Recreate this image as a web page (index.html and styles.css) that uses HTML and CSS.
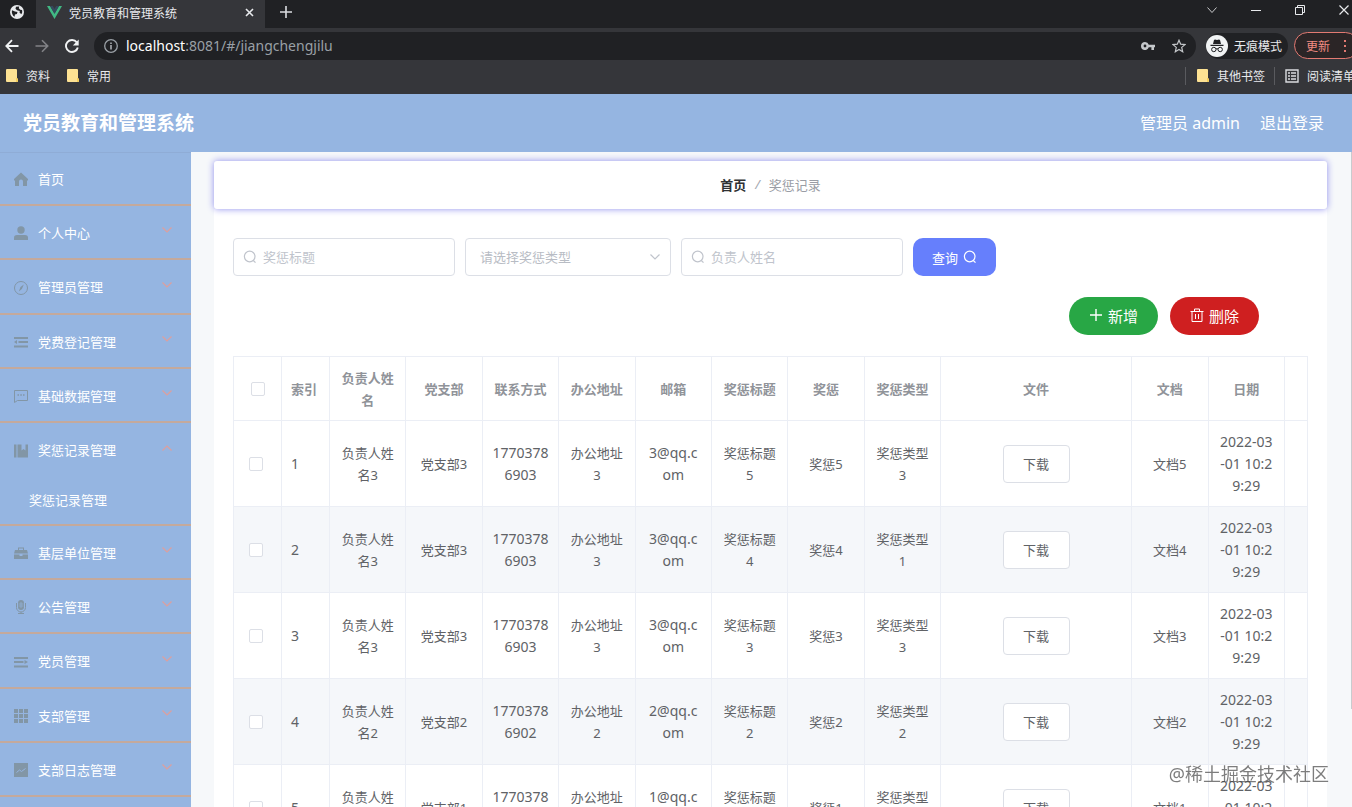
FILE: index.html
```html
<!DOCTYPE html>
<html lang="zh-CN">

<head>
    <meta charset="utf-8">
    <title>党员教育和管理系统</title>
    <link rel="stylesheet" href="styles.css">
</head>

<body>
    <!-- icons -->
    <svg class="sprite" aria-hidden="true">
        <symbol id="i-down" viewBox="0 0 12 12">
            <path d="M1.5 3.5 6 8l4.5-4.5" fill="none" stroke="currentColor" stroke-width="1.2" />
        </symbol>
        <symbol id="i-search" viewBox="0 0 14 14">
            <circle cx="6.7" cy="6.5" r="5.3" fill="none" stroke="currentColor" stroke-width="1.2" />
            <path d="M10.3 10.5l2.2 2.2" stroke="currentColor" stroke-width="1.2" />
        </symbol>
        <symbol id="i-folder" viewBox="0 0 12 14">
            <path d="M0 1q0-1 1-1h9q1 0 1 1v8q1 .5 1 2v1q0 1-1 1H1q-1 0-1-1z" fill="#fde293" />
            <path d="M10 9h1q1 1 1 2v1q0 1-1 1h-1z" fill="#f5cf5c" />
        </symbol>
    </svg>

    <div class="browser">
        <div class="tabs">
            <button class="tab-pinned" aria-label="新标签页">
                <svg width="14" height="14" viewBox="0 0 14 14">
                    <circle cx="7" cy="7" r="7" fill="#e8eaed" />
                    <path d="M2 5.2 5 6.5l2.5.6-.6 1.8-2 .6-.3 2.3C2.6 10.5 1.3 8 2 5.2zM6 1.8l3.2-.3-.4 1.8 1.4 1.5 1.8.1c.5 2 .2 3-.7 4.3L9.5 7.6 9.8 6 7 5.3 5.5 3.8z" fill="#202124" />
                </svg>
            </button>
            <div class="tab">
                <svg width="15" height="13" viewBox="0 0 15 13">
                    <path d="M0 0h3l4.5 7.8L12 0h3L7.5 13z" fill="#41b883" />
                    <path d="M3 0h2.8l1.7 3 1.7-3H12L7.5 7.8z" fill="#35495e" />
                </svg>
                <span>党员教育和管理系统</span>
                <button aria-label="关闭标签页">
                    <svg width="9" height="9" viewBox="0 0 9 9">
                        <path d="M1 1l7 7M8 1L1 8" stroke="#e8eaed" stroke-width="1.6" />
                    </svg>
                </button>
            </div>
            <button class="tab-new" aria-label="新建标签页">
                <svg width="12" height="12" viewBox="0 0 12 12">
                    <path d="M6 0v12M0 6h12" stroke="#dadce0" stroke-width="1.6" />
                </svg>
            </button>
            <div class="window-buttons">
                <button aria-label="搜索标签页">
                    <svg width="12" height="12" viewBox="0 0 12 12">
                        <path d="M1.5 3.5 6 8.5l4.5-5" fill="none" stroke="#c8c9cb" />
                    </svg>
                </button>
                <button aria-label="最小化">
                    <svg width="12" height="12" viewBox="0 0 12 12">
                        <path d="M1 6.5h10" stroke="#e8eaed" />
                    </svg>
                </button>
                <button aria-label="还原">
                    <svg width="12" height="12" viewBox="0 0 12 12">
                        <path d="M1.5 3.5h7v7h-7zM3.5 3.5v-2h7v7h-2" fill="none" stroke="#e8eaed" />
                    </svg>
                </button>
                <button aria-label="关闭">
                    <svg width="12" height="12" viewBox="0 0 12 12">
                        <path d="M1.5 1.5l9 9M10.5 1.5l-9 9" stroke="#e8eaed" stroke-width="1.2" />
                    </svg>
                </button>
            </div>
        </div>

        <div class="toolbar">
            <button class="nav-button" aria-label="后退">
                <svg width="14" height="14" viewBox="0 0 14 14">
                    <path d="M13.5 7H1.5M7 1.2 1.3 7 7 12.8" fill="none" stroke="#f1f3f4" stroke-width="1.8" />
                </svg>
            </button>
            <button class="nav-button" aria-label="前进">
                <svg width="14" height="14" viewBox="0 0 14 14">
                    <path d="M.5 7h12M7 1.2 12.7 7 7 12.8" fill="none" stroke="#828387" stroke-width="1.6" />
                </svg>
            </button>
            <button class="nav-button" aria-label="刷新">
                <svg width="14" height="14" viewBox="0 0 14 14">
                    <path d="M11.8 3.4A6 6 0 1 0 12.8 8.5" fill="none" stroke="#f1f3f4" stroke-width="1.9" />
                    <path d="M13.7.5v6H7.8z" fill="#f1f3f4" />
                </svg>
            </button>
            <div class="address">
                <svg width="14" height="14" viewBox="0 0 14 14">
                    <circle cx="7" cy="7" r="6.3" fill="none" stroke="#9aa0a6" stroke-width="1.3" />
                    <path d="M7 6v4.5M7 3.5v1.4" stroke="#bdc1c6" stroke-width="1.4" />
                </svg>
                <span class="url"><b>localhost</b>:8081/#/jiangchengjilu</span>
                <svg width="14" height="8" viewBox="0 0 14 8">
                    <path d="M4 0a4 4 0 0 1 3.8 2.7H14v2.6h-1V8h-2.6V5.3H7.8A4 4 0 1 1 4 0zm0 2.6a1.4 1.4 0 1 0 0 2.8 1.4 1.4 0 0 0 0-2.8z" fill="#c4c7ca" />
                </svg>
                <svg class="star" width="14" height="14" viewBox="0 0 14 14">
                    <path d="M7 1.2l1.7 4 4.3.4-3.3 2.8 1 4.3L7 10.4l-3.7 2.3 1-4.3L1 5.6l4.3-.4z" fill="none" stroke="#c4c7ca" stroke-width="1.2" />
                </svg>
            </div>
            <div class="incognito">
                <svg width="22" height="22" viewBox="0 0 22 22">
                    <circle cx="11" cy="11" r="11" fill="#f1f3f4" />
                    <path d="M8 5l1-.5 2 .6 2-.6 1 .5 1 4H7zM4.5 9.8h13v1.2h-13z" fill="#202124" />
                    <g fill="none" stroke="#202124">
                        <circle cx="7.8" cy="14.5" r="2.2" />
                        <circle cx="14.2" cy="14.5" r="2.2" />
                        <path d="M10 14q1-.7 2 0" />
                    </g>
                </svg>
                <span>无痕模式</span>
            </div>
            <button class="update">
                <span>更新</span>
                <svg width="4" height="14" viewBox="0 0 4 14">
                    <path d="M1 1h2v2H1zM1 6h2v2H1zM1 11h2v2H1z" fill="#e37a72" />
                </svg>
            </button>
        </div>

        <div class="bookmarks">
            <a href="#"><svg width="12" height="14"><use href="#i-folder" /></svg>资料</a>
            <a href="#"><svg width="12" height="14"><use href="#i-folder" /></svg>常用</a>
            <a href="#" class="other"><svg width="12" height="14"><use href="#i-folder" /></svg>其他书签</a>
            <a href="#" class="reading">
                <svg width="14" height="14" viewBox="0 0 14 14">
                    <path d="M1 1h12v12H1z" fill="none" stroke="#dadce0" stroke-width="1.4" />
                    <path d="M3 4h2M6 4h5M3 7h2M6 7h5M3 10h2M6 10h5" stroke="#dadce0" stroke-width="1.4" />
                </svg>阅读清单</a>
        </div>
    </div>

    <header>
        <h1>党员教育和管理系统</h1>
        <span class="user">管理员 admin</span>
        <a href="#">退出登录</a>
    </header>

    <div class="layout">
        <nav>
            <ul class="menu">
                <li><a href="#">
                        <svg class="icon" viewBox="0 0 14 14">
                            <path d="M7 .5 14 7v1.5h-1V14H9V9.5a2 2 0 0 0-4 0V14H1V8.5H0V7z" fill="currentColor" />
                        </svg>首页</a></li>
                <li><a href="#">
                        <svg class="icon" viewBox="0 0 14 14">
                            <circle cx="7" cy="4" r="3.7" fill="currentColor" />
                            <path d="M0 14v-2.5Q0 9 3 9h8q3 0 3 2.5V14z" fill="currentColor" />
                        </svg>个人中心<svg class="arrow"><use href="#i-down" /></svg></a></li>
                <li><a href="#">
                        <svg class="icon" viewBox="0 0 14 14">
                            <circle cx="7" cy="7" r="6.5" fill="none" stroke="currentColor" />
                            <path d="M9.8 3.5 7.9 8.1 4.8 10.5 6.5 6z" fill="currentColor" />
                        </svg>管理员管理<svg class="arrow"><use href="#i-down" /></svg></a></li>
                <li><a href="#">
                        <svg class="icon" viewBox="0 0 14 14">
                            <path d="M0 2h14v2H0zM4.5 6H14v2H4.5zM0 10.5h14v2H0zM0 7l3-2v4z" fill="currentColor" />
                        </svg>党费登记管理<svg class="arrow"><use href="#i-down" /></svg></a></li>
                <li><a href="#">
                        <svg class="icon" viewBox="0 0 14 14">
                            <path d="M.5 13.5v-12h13v10H3.5z" fill="none" stroke="currentColor" />
                            <path d="M3.5 6h1.5M6.3 6h1.5M9 6h1.5" stroke="currentColor" stroke-width="1.5" />
                        </svg>基础数据管理<svg class="arrow"><use href="#i-down" /></svg></a></li>
                <li><a href="#">
                        <svg class="icon" viewBox="0 0 14 14">
                            <path d="M0 .5h2.5v13H0zM3.5.5h4v6l2-1.5 2 1.5v-6H14v13H3.5z" fill="currentColor" />
                        </svg>奖惩记录管理<svg class="arrow up"><use href="#i-down" /></svg></a>
                    <ul class="submenu">
                        <li><a href="#">奖惩记录管理</a></li>
                    </ul>
                </li>
                <li><a href="#">
                        <svg class="icon" viewBox="0 0 14 14">
                            <path d="M4 4V1.5h6V4h3l1 3.5H0L1 4zM5 2.5V4h4V2.5zM0 8.5h5.5V10h3V8.5H14V13H0z" fill="currentColor" fill-rule="evenodd" />
                        </svg>基层单位管理<svg class="arrow"><use href="#i-down" /></svg></a></li>
                <li><a href="#">
                        <svg class="icon" viewBox="0 0 14 14">
                            <rect x="4" y="0" width="6" height="10" rx="3" fill="currentColor" />
                            <path d="M2.5 3v4.5a4.5 4.5 0 0 0 9 0V3M7 12v2M4 13.5h6" fill="none" stroke="currentColor" />
                            <path d="M7 2v6M4.5 4h5M4.5 6h5" stroke="#95b5e1" stroke-width=".6" />
                        </svg>公告管理<svg class="arrow"><use href="#i-down" /></svg></a></li>
                <li><a href="#">
                        <svg class="icon" viewBox="0 0 14 14">
                            <path d="M0 2h14v2H0zM0 6h9.5v2H0zM0 10.5h14v2H0zM14 7l-3.5-2v4z" fill="currentColor" />
                        </svg>党员管理<svg class="arrow"><use href="#i-down" /></svg></a></li>
                <li><a href="#">
                        <svg class="icon" viewBox="0 0 14 14">
                            <path d="M0 0h4v4H0zM5 0h4v4H5zM10 0h4v4h-4zM0 5h4v4H0zM5 5h4v4H5zM10 5h4v4h-4zM0 10h4v4H0zM5 10h4v4H5zM10 10h4v4h-4z" fill="currentColor" />
                        </svg>支部管理<svg class="arrow"><use href="#i-down" /></svg></a></li>
                <li><a href="#">
                        <svg class="icon" viewBox="0 0 14 14">
                            <path d="M0 0h14v14H0z" fill="currentColor" />
                            <path d="M2.5 9.5 5.5 7l2 1.5 4-3" fill="none" stroke="#95b5e1" />
                        </svg>支部日志管理<svg class="arrow"><use href="#i-down" /></svg></a></li>
                <li><a href="#"></a></li>
            </ul>
        </nav>

        <main>
            <div class="breadcrumb">
                <a href="#">首页</a><i>/</i><span>奖惩记录</span>
            </div>

            <section>
                <form class="search">
                    <label class="field">
                        <svg width="14" height="14"><use href="#i-search" /></svg>
                        <input type="text" placeholder="奖惩标题" aria-label="奖惩标题">
                    </label>
                    <label class="field field-select">
                        <select aria-label="奖惩类型">
                            <option>请选择奖惩类型</option>
                        </select>
                        <svg width="12" height="12"><use href="#i-down" /></svg>
                    </label>
                    <label class="field">
                        <svg width="14" height="14"><use href="#i-search" /></svg>
                        <input type="text" placeholder="负责人姓名" aria-label="负责人姓名">
                    </label>
                    <button type="button" class="query">查询<svg width="14" height="14"><use href="#i-search" /></svg></button>
                </form>

                <div class="actions">
                    <button class="add">
                        <svg width="14" height="14" viewBox="0 0 14 14">
                            <path d="M7 1v12M1 7h12" stroke="currentColor" stroke-width="1.4" />
                        </svg>新增</button>
                    <button class="delete">
                        <svg width="14" height="14" viewBox="0 0 14 14">
                            <path d="M.5 3.5h13M2 3.5v10h10v-10M4.5 3.5v-2.5h5v2.5M5.5 6v5M8.5 6v5" fill="none" stroke="currentColor" />
                        </svg>删除</button>
                </div>

                <table>
                    <colgroup>
                        <col class="col-small">
                        <col class="col-small">
                        <col span="8">
                        <col class="col-file">
                        <col span="2">
                        <col class="col-gutter">
                    </colgroup>
                    <thead>
                        <tr>
                            <th><input type="checkbox" aria-label="全选"></th>
                            <th class="left">索引</th>
                            <th>负责人姓名</th>
                            <th>党支部</th>
                            <th>联系方式</th>
                            <th>办公地址</th>
                            <th>邮箱</th>
                            <th>奖惩标题</th>
                            <th>奖惩</th>
                            <th>奖惩类型</th>
                            <th>文件</th>
                            <th>文档</th>
                            <th>日期</th>
                            <th></th>
                        </tr>
                    </thead>
                    <tbody>
                        <tr>
                            <td class="check"><input type="checkbox" aria-label="选择 1"></td>
                            <td class="left num">1</td>
                            <td>负责人姓名3</td>
                            <td>党支部3</td>
                            <td class="num">17703786903</td>
                            <td>办公地址3</td>
                            <td class="num">3@qq.c<br>om</td>
                            <td>奖惩标题5</td>
                            <td>奖惩5</td>
                            <td>奖惩类型3</td>
                            <td><button class="download">下载</button></td>
                            <td>文档5</td>
                            <td class="num">2022-03<br>-01 10:2<br>9:29</td>
                            <td></td>
                        </tr>
                        <tr>
                            <td class="check"><input type="checkbox" aria-label="选择 2"></td>
                            <td class="left num">2</td>
                            <td>负责人姓名3</td>
                            <td>党支部3</td>
                            <td class="num">17703786903</td>
                            <td>办公地址3</td>
                            <td class="num">3@qq.c<br>om</td>
                            <td>奖惩标题4</td>
                            <td>奖惩4</td>
                            <td>奖惩类型1</td>
                            <td><button class="download">下载</button></td>
                            <td>文档4</td>
                            <td class="num">2022-03<br>-01 10:2<br>9:29</td>
                            <td></td>
                        </tr>
                        <tr>
                            <td class="check"><input type="checkbox" aria-label="选择 3"></td>
                            <td class="left num">3</td>
                            <td>负责人姓名3</td>
                            <td>党支部3</td>
                            <td class="num">17703786903</td>
                            <td>办公地址3</td>
                            <td class="num">3@qq.c<br>om</td>
                            <td>奖惩标题3</td>
                            <td>奖惩3</td>
                            <td>奖惩类型3</td>
                            <td><button class="download">下载</button></td>
                            <td>文档3</td>
                            <td class="num">2022-03<br>-01 10:2<br>9:29</td>
                            <td></td>
                        </tr>
                        <tr>
                            <td class="check"><input type="checkbox" aria-label="选择 4"></td>
                            <td class="left num">4</td>
                            <td>负责人姓名2</td>
                            <td>党支部2</td>
                            <td class="num">17703786902</td>
                            <td>办公地址2</td>
                            <td class="num">2@qq.c<br>om</td>
                            <td>奖惩标题2</td>
                            <td>奖惩2</td>
                            <td>奖惩类型2</td>
                            <td><button class="download">下载</button></td>
                            <td>文档2</td>
                            <td class="num">2022-03<br>-01 10:2<br>9:29</td>
                            <td></td>
                        </tr>
                        <tr>
                            <td class="check"><input type="checkbox" aria-label="选择 5"></td>
                            <td class="left num">5</td>
                            <td>负责人姓名1</td>
                            <td>党支部1</td>
                            <td class="num">17703786901</td>
                            <td>办公地址1</td>
                            <td class="num">1@qq.c<br>om</td>
                            <td>奖惩标题1</td>
                            <td>奖惩1</td>
                            <td>奖惩类型1</td>
                            <td><button class="download">下载</button></td>
                            <td>文档1</td>
                            <td class="num">2022-03<br>-01 10:2<br>9:29</td>
                            <td></td>
                        </tr>
                    </tbody>
                </table>
            </section>
        </main>
    </div>

    <div class="watermark">@稀土掘金技术社区</div>
</body>

</html>
```
FILE: styles.css
```css
* {
    margin: 0;
    padding: 0;
    box-sizing: border-box;
}

:root {
    --blue: #95b5e1;
    --line: #ebeef5;
    --chrome: #35363a;
    --chrome-dark: #202124;
}

body {
    display: flex;
    flex-direction: column;
    height: 100vh;
    overflow: hidden;
    font-family: "Noto Sans", "Noto Sans CJK SC", sans-serif;
    font-size: 13px;
    color: #606266;
    background-color: #f6f8fa;
}

a {
    color: inherit;
    text-decoration: none;
}

ul {
    list-style: none;
}

button {
    font-family: inherit;
    font-size: 13px;
    color: inherit;
    background: none;
    border: none;
    cursor: pointer;
}

svg {
    flex: none;
    display: block;
}

.sprite {
    position: absolute;
    width: 0;
    height: 0;
}

/* browser */
.browser {
    flex: none;
    color: #e8eaed;
    font-size: 12px;
    background-color: var(--chrome);
    overflow: hidden;
}

.tabs {
    display: flex;
    height: 28px;
    background-color: var(--chrome-dark);
}

.tabs button,
.tab {
    display: flex;
    align-items: center;
}

.tab-pinned {
    width: 36px;
    padding: 0 0 4px 10px;
}

.tab {
    width: 229px;
    padding: 0 11px 3px 11px;
    gap: 7px;
    background-color: var(--chrome);
}

.tab span {
    flex: 1;
    white-space: nowrap;
}

.tab-new {
    padding: 0 15px 4px;
}

.window-buttons {
    display: flex;
    gap: 32px;
    margin-left: auto;
    padding: 0 2px 9px 0;
}

.toolbar {
    display: flex;
    align-items: center;
    height: 35px;
    padding-left: 5px;
}

.nav-button {
    width: 14px;
    margin-right: 16px;
}

.address {
    display: flex;
    flex: 1;
    align-items: center;
    height: 28px;
    padding: 0 10px;
    margin-left: -1px;
    border-radius: 14px;
    background-color: var(--chrome-dark);
}

.url {
    flex: 1;
    margin-left: 8px;
    font-size: 14px;
    color: #9aa0a6;
}

.url b {
    font-weight: normal;
    color: #ffffff;
}

.star {
    margin-left: 17px;
}

.incognito {
    display: flex;
    align-items: center;
    height: 26px;
    margin-left: 10px;
    padding-right: 6px;
    gap: 6px;
    border-radius: 13px;
    background-color: var(--chrome-dark);
}

.update {
    display: flex;
    align-items: center;
    height: 27px;
    margin: 0 -7px 0 6px;
    padding: 0 11px;
    gap: 13px;
    font-size: 12px;
    color: #f28b82;
    border: 1px solid #e37a72;
    border-radius: 14px;
    background-color: #2b2526;
}

.bookmarks {
    display: flex;
    align-items: center;
    height: 31px;
    padding: 0 0 5px 6px;
    gap: 17px;
}

.bookmarks a {
    display: flex;
    align-items: center;
    gap: 8px;
    white-space: nowrap;
}

.bookmarks .other {
    margin-left: auto;
    padding-left: 11px;
    border-left: 1px solid #5a5b5f;
}

.bookmarks .reading {
    margin: 0 -3px 0 -8px;
    padding-left: 10px;
    border-left: 1px solid #5a5b5f;
}

/* header */
header {
    display: flex;
    flex: none;
    align-items: center;
    height: 58px;
    padding: 0 28px 0 23px;
    font-size: 16px;
    line-height: 24px;
    color: #ffffff;
    background-color: var(--blue);
}

h1 {
    flex: 1;
    font-size: 19px;
}

.user {
    margin-right: 20px;
}

.layout {
    position: relative;
    display: flex;
    flex: 1;
    min-height: 0;
    overflow: hidden;
}

/* scrollbar */
.layout::after {
    content: "";
    position: absolute;
    top: 0;
    right: 0;
    width: 1px;
    height: 85%;
    background-color: #c9cbce;
}

/* menu */
nav {
    flex: none;
    width: 191px;
    background-color: var(--blue);
    border-top: 1px solid #8facd6;
    overflow: hidden;
}

.menu {
    margin-top: -1px;
}

.menu > li {
    border-bottom: 2px solid #c4a99c;
}

.menu > li > a {
    display: flex;
    align-items: center;
    height: 52px;
    padding: 0 18px 0 14px;
    color: #ffffff;
}

.menu > li:nth-child(3n) > a {
    height: 53px;
}

.icon {
    width: 14px;
    height: 14px;
    margin: 2px 10px 0 0;
    color: #8296a6;
}

.arrow {
    width: 12px;
    height: 12px;
    margin: 0 0 4px auto;
    color: #dd9f9d;
}

.arrow.up {
    transform: rotate(180deg);
}

.submenu a {
    display: block;
    padding-left: 29px;
    line-height: 48px;
    color: #ffffff;
}

/* content */
main {
    flex: 1;
    min-width: 0;
    padding: 9px 25px 0 23px;
}

.breadcrumb {
    position: relative;
    display: flex;
    align-items: center;
    justify-content: center;
    height: 48px;
    padding-bottom: 2px;
    border-radius: 3px;
    background-color: #ffffff;
    box-shadow: 0 0 7px #8f8fee;
}

.breadcrumb a {
    font-weight: bold;
    color: #303133;
}

.breadcrumb i {
    margin: 0 9px;
    color: #a4a8b0;
}

.breadcrumb span {
    color: #9a9da5;
}

section {
    padding: 29px 19px 0 19px;
    background-color: #ffffff;
}

.search {
    display: flex;
    gap: 10px;
}

.field {
    display: flex;
    align-items: center;
    width: 222px;
    height: 38px;
    padding: 0 9px;
    gap: 6px;
    border: 1px solid #dcdfe6;
    border-radius: 4px;
    color: #c0c4cc;
}

.field-select {
    width: 206px;
    padding-left: 14px;
}

.field input,
.field select {
    flex: 1;
    min-width: 0;
    font-family: inherit;
    font-size: 13px;
    color: #b8bcc4;
    border: none;
    outline: none;
    background: none;
    appearance: none;
}

.field input::placeholder {
    color: #c0c4cc;
}

.query {
    display: flex;
    align-items: center;
    justify-content: center;
    width: 83px;
    height: 38px;
    gap: 5px;
    color: #ffffff;
    border-radius: 10px;
    background-color: #667ffc;
}

.actions {
    display: flex;
    justify-content: flex-end;
    margin: 21px 49px 21px 0;
    gap: 12px;
}

.actions button {
    display: flex;
    align-items: center;
    justify-content: center;
    width: 89px;
    height: 38px;
    gap: 5px;
    padding-bottom: 2px;
    font-size: 15px;
    color: #ffffff;
    border-radius: 19px;
}

.actions .add {
    background-color: #28a745;
}

.actions .delete {
    background-color: #cf1f20;
}

/* table */
table {
    width: 100%;
    table-layout: fixed;
    border-spacing: 0;
    border-top: 1px solid var(--line);
    border-left: 1px solid var(--line);
}

.col-small {
    width: 48px;
}

.col-file {
    width: 191px;
}

.col-gutter {
    width: 23px;
}

th,
td {
    padding: 10px 9px 9px;
    line-height: 22px;
    text-align: center;
    word-break: break-all;
    border-right: 1px solid var(--line);
    border-bottom: 1px solid var(--line);
}

th {
    color: #909399;
}

tbody tr:nth-child(even) {
    background-color: #f5f7fa;
}

.left {
    padding-right: 0;
    text-align: left;
}

.num {
    font-size: 14px;
}

.check {
    padding-left: 15px;
    text-align: left;
}

table input {
    display: block;
    width: 14px;
    height: 14px;
    appearance: none;
    border: 1px solid #dcdfe6;
    border-radius: 2px;
    background-color: #ffffff;
}

th input {
    margin: 0 auto;
}

.download {
    width: 67px;
    height: 38px;
    padding-bottom: 2px;
    vertical-align: middle;
    border: 1px solid #dcdfe6;
    border-radius: 4px;
    background-color: #ffffff;
}

.watermark {
    position: fixed;
    right: 23px;
    bottom: 20px;
    font-size: 18px;
    line-height: 26px;
    color: rgba(70, 70, 70, 0.7);
}
```
